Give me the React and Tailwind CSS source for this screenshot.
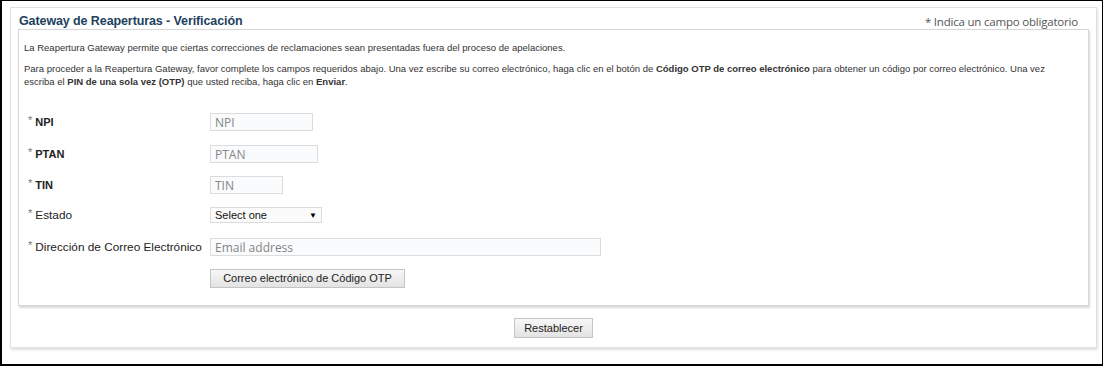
import React, { useState } from 'react';

const inputCls =
  "h-[18px] px-[4px] border border-[#dcdcdc] bg-[#f9fbfc] text-[12px] text-[#444] placeholder:text-[#858585] font-['Open_Sans',sans-serif] outline-none";

const Star = () => <span className="text-[#777] text-[11px] relative -top-[2px] mr-[3px] font-normal">*</span>;

const Row = ({ text, bold = true, children, className = '' }) => (
  <div className={`flex items-center ${className}`}>
    <div className={`w-[182px] text-[#222] ${bold ? 'font-bold text-[11px]' : 'text-[11.8px]'}`}>
      <Star />
      {text}
    </div>
    {children}
  </div>
);

export default function App() {
  const [form, setForm] = useState({ npi: '', ptan: '', tin: '', estado: '', email: '' });

  const handleChange = (e) => {
    const { name, value } = e.target;
    setForm(prev => ({ ...prev, [name]: value }));
  };

  const reset = () => setForm({ npi: '', ptan: '', tin: '', estado: '', email: '' });

  return (
    <div className="w-[1103px] h-[366px] bg-white border-l-2 border-t border-b-2 border-r border-black pl-[8px] pr-[5px] pt-[6px] font-['Liberation_Sans',Arial,sans-serif]">
      <div className="h-[341px] border border-[#e2e2e2] shadow-[1px_2px_2px_rgba(0,0,0,0.12)] px-[7px]">
        <div className="flex items-end justify-between h-[21px] pl-[1px] pr-[11px]">
          <h2 className="text-[12.5px] font-bold text-[#1d3f5e] tracking-[-0.1px] leading-none pb-[2px]">
            Gateway de Reaperturas - Verificación
          </h2>
          <span className="text-[11.5px] text-[#555] font-['Open_Sans',sans-serif] tracking-[-0.2px] leading-none pb-[2px]">
            * Indica un campo obligatorio
          </span>
        </div>

        <div className="h-[277px] border border-[#d6d6d6] shadow-[1px_2px_2px_rgba(0,0,0,0.15)] pl-[5px] pr-[14px] pt-[11px] text-[9.5px] text-[#333] leading-[13px]">
          <p>La Reapertura Gateway permite que ciertas correcciones de reclamaciones sean presentadas fuera del proceso de apelaciones.</p>
          <p className="mt-[8px]">
            Para proceder a la Reapertura Gateway, favor complete los campos requeridos abajo. Una vez escribe su correo electrónico, haga clic en el botón de{' '}
            <b>Código OTP de correo electrónico</b> para obtener un código por correo electrónico. Una vez escriba el{' '}
            <b>PIN de una sola vez (OTP)</b> que usted reciba, haga clic en <b>Enviar</b>.
          </p>

          <div className="pl-[4px] mt-[25px]">
            <Row text="NPI">
              <input name="npi" value={form.npi} onChange={handleChange} placeholder="NPI" className={`${inputCls} w-[103px]`} />
            </Row>
            <Row text="PTAN" className="mt-[14px]">
              <input name="ptan" value={form.ptan} onChange={handleChange} placeholder="PTAN" className={`${inputCls} w-[108px]`} />
            </Row>
            <Row text="TIN" className="mt-[13px]">
              <input name="tin" value={form.tin} onChange={handleChange} placeholder="TIN" className={`${inputCls} w-[73px]`} />
            </Row>
            <Row text="Estado" bold={false} className="mt-[13px]">
              <div className="relative w-[112px] h-[16px] border border-[#dcdcdc] bg-[#fbfbfb] flex items-center px-[4px] text-[11px] text-[#111]">
                <span className="flex-1">Select one</span>
                <span className="text-[8px] text-black">▼</span>
                <select
                  name="estado"
                  value={form.estado}
                  onChange={handleChange}
                  className="absolute inset-0 opacity-0"
                >
                  <option value="">Select one</option>
                </select>
              </div>
            </Row>
            <Row text="Dirección de Correo Electrónico" bold={false} className="mt-[15px]">
              <input name="email" value={form.email} onChange={handleChange} placeholder="Email address" className={`${inputCls} w-[391px]`} />
            </Row>
            <div className="pl-[182px] mt-[13px]">
              <button
                type="button"
                className="h-[19px] w-[195px] border border-[#c4c4c4] bg-gradient-to-b from-[#f7f7f7] to-[#e3e3e3] text-[11px] text-[#222]"
              >
                Correo electrónico de Código OTP
              </button>
            </div>
          </div>
        </div>

        <div className="flex justify-center mt-[12px]">
          <button
            type="button"
            onClick={reset}
            className="h-[20px] w-[79px] border border-[#c4c4c4] bg-gradient-to-b from-[#f7f7f7] to-[#e3e3e3] text-[11px] text-[#222]"
          >
            Restablecer
          </button>
        </div>
      </div>
    </div>
  );
}
